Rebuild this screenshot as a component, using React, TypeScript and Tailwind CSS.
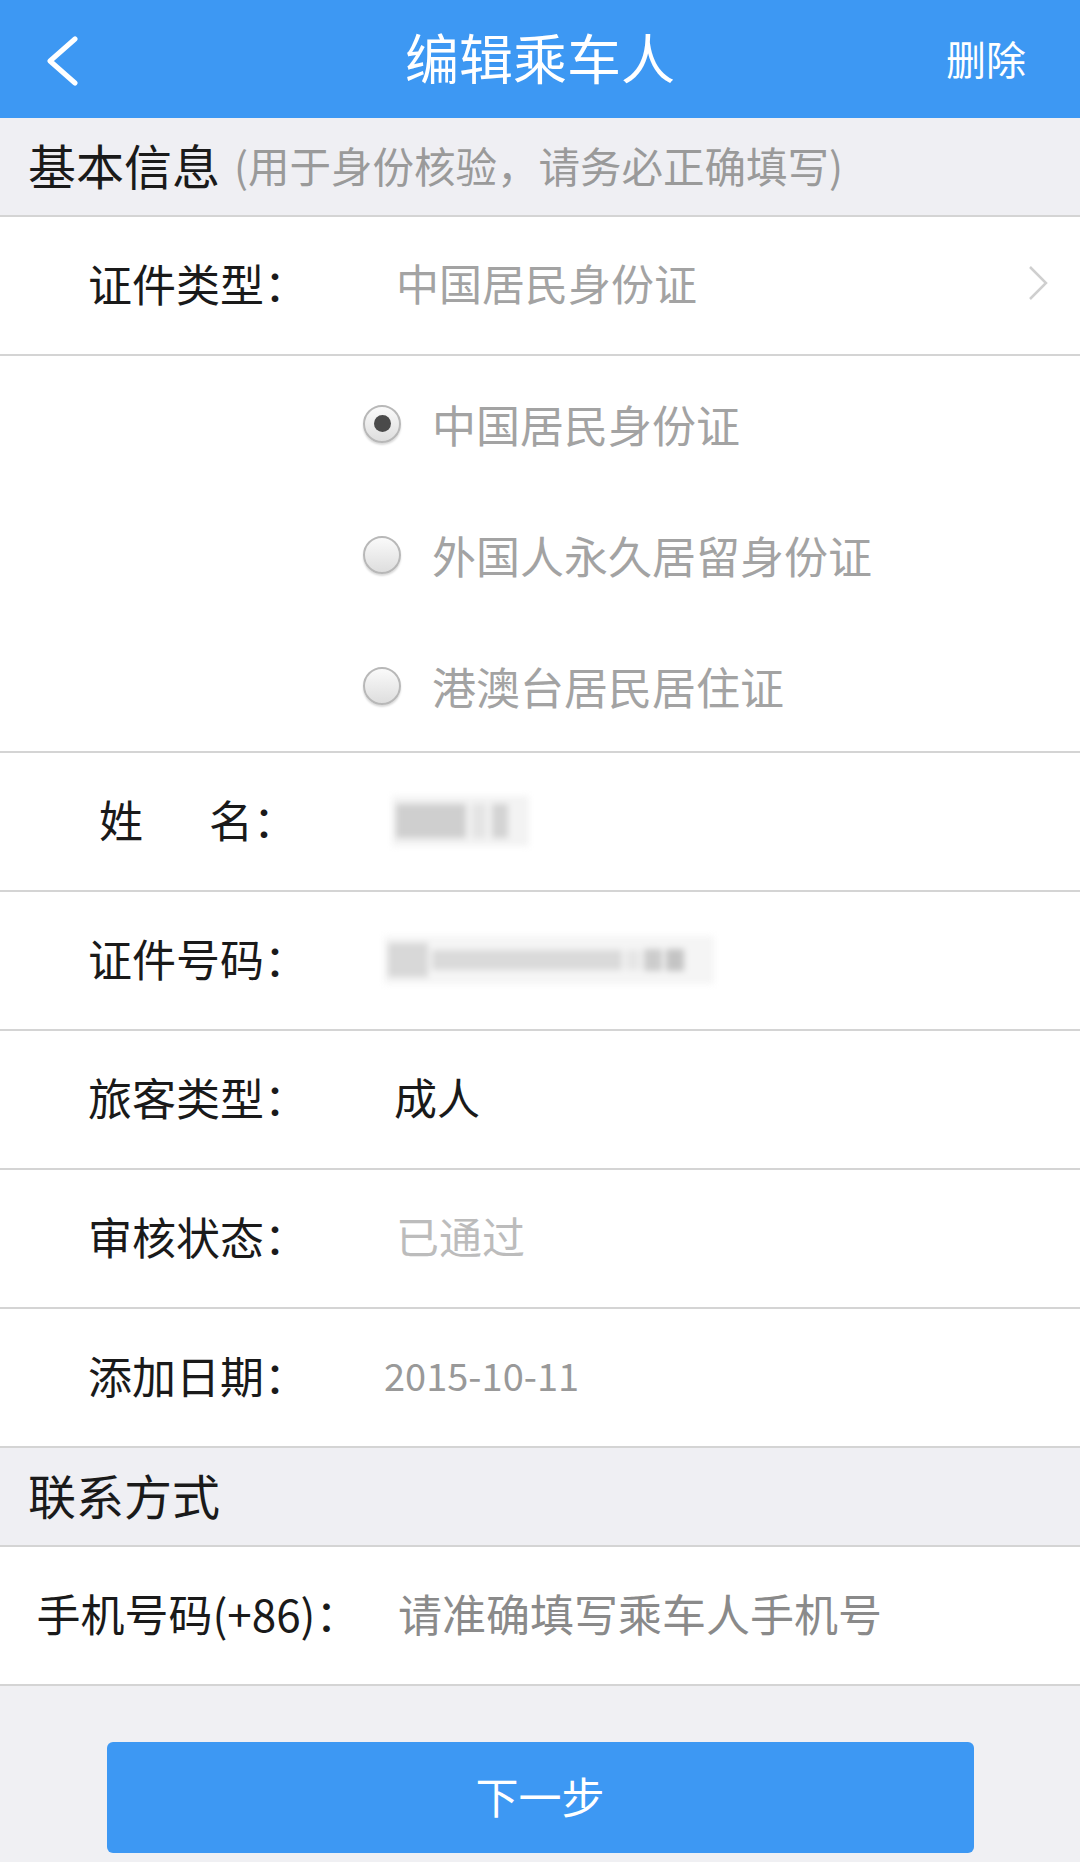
import React from "react"

const font = "font-['Noto_Sans_CJK_SC','Noto_Sans',sans-serif]"

function Radio({ checked, label }: { checked?: boolean; label: string }) {
  return (
    <div className="flex h-[131px] items-center">
      <div className="ml-[363px] flex h-[38px] w-[38px] items-center justify-center rounded-full border-2 border-[#b8b8b8] bg-gradient-to-b from-[#fafafa] to-[#dedede] shadow-[0_2px_2px_rgba(0,0,0,0.15)]">
        {checked && <div className="h-[17px] w-[17px] rounded-full bg-[#4a4a4a]" />}
      </div>
      <span className="ml-[31px] text-[44px] leading-none text-[#a3a3a3]">{label}</span>
    </div>
  )
}

function Row({ label, children }: { label: React.ReactNode; children?: React.ReactNode }) {
  return (
    <div className="flex h-[139px] items-center border-b-2 border-[#d4d4d4] bg-white pb-[6px]">
      <div className="w-[396px] shrink-0 text-center text-[44px] leading-none text-[#1a1a1a]">{label}</div>
      <div className="flex flex-1 items-center">{children}</div>
    </div>
  )
}

function Section({ children }: { children: React.ReactNode }) {
  return (
    <div className="flex h-[99px] items-center border-b-2 border-[#d4d4d4] bg-[#efeff3] pb-[6px] pl-[28px]">
      {children}
    </div>
  )
}

export default function App() {
  return (
    <div className={`${font} min-h-[1862px] w-[1080px] bg-[#f0f0f3]`}>
      {/* Header */}
      <div className="relative flex h-[118px] items-center justify-center bg-[#3d98f3] pb-[4px]">
        <svg className="absolute left-[44px] top-[36px]" width="36" height="50" viewBox="0 0 36 50">
          <polyline points="31,3 6,25 31,47" fill="none" stroke="white" strokeWidth="5" strokeLinecap="round" strokeLinejoin="round" />
        </svg>
        <span className="text-[54px] leading-none text-white">编辑乘车人</span>
        <span className="absolute right-[54px] top-[38px] text-[40px] leading-none text-white">删除</span>
      </div>

      <Section>
        <span className="text-[48px] leading-none text-[#1a1a1a]">基本信息</span>
        <span className="ml-[14px] mt-[4px] text-[41.5px] leading-none text-[#9a9a9a]">(用于身份核验，请务必正确填写)</span>
      </Section>

      <div className="flex h-[139px] items-center border-b-2 border-[#d4d4d4] bg-white pb-[6px]">
        <div className="w-[396px] shrink-0 text-center text-[44px] leading-none text-[#1a1a1a]">证件类型：</div>
        <span className="flex-1 text-[43px] leading-none text-[#a3a3a3]">中国居民身份证</span>
        <svg className="mr-[30px]" width="24" height="38" viewBox="0 0 24 38">
          <polyline points="4,3 20,19 4,35" fill="none" stroke="#cfcfcf" strokeWidth="2.5" />
        </svg>
      </div>

      <div className="flex flex-col border-b-2 border-[#d4d4d4] bg-white pt-[2px]">
        <Radio checked label="中国居民身份证" />
        <Radio label="外国人永久居留身份证" />
        <Radio label="港澳台居民居住证" />
      </div>

      <Row
        label={
          <span>
            姓<span className="ml-[66px]">名：</span>
          </span>
        }
      >
        <div className="ml-[-4px] mt-[4px] flex h-[50px] w-[137px] items-center gap-[6px] bg-[#f3f3f3] px-[4px] blur-[3px]">
          <div className="h-[34px] w-[70px] bg-[#cfcfcf]" />
          <div className="h-[34px] w-[14px] bg-[#e4e4e4]" />
          <div className="h-[34px] w-[16px] bg-[#d4d4d4]" />
        </div>
      </Row>

      <Row label="证件号码：">
        <div className="ml-[-12px] mt-[4px] flex h-[48px] w-[330px] items-center gap-[4px] bg-[#f5f5f5] px-[4px] blur-[3px]">
          <div className="h-[34px] w-[40px] bg-[#d8d8d8]" />
          <div className="h-[20px] w-[190px] bg-[#dadada]" />
          <div className="h-[20px] w-[14px] bg-[#e6e6e6]" />
          <div className="h-[22px] w-[18px] bg-[#cccccc]" />
          <div className="h-[22px] w-[18px] bg-[#c4c4c4]" />
        </div>
      </Row>

      <Row label="旅客类型：">
        <span className="ml-[-2px] text-[43px] leading-none text-[#1a1a1a]">成人</span>
      </Row>

      <Row label="审核状态：">
        <span className="text-[43px] leading-none text-[#bcbcbc]">已通过</span>
      </Row>

      <Row label="添加日期：">
        <span className="ml-[-12px] text-[38px] leading-none text-[#999999]">2015-10-11</span>
      </Row>

      <Section>
        <span className="text-[48px] leading-none text-[#1a1a1a]">联系方式</span>
      </Section>

      <Row label="手机号码(+86)：">
        <span className="ml-[2px] text-[44px] leading-none text-[#8a8a8a]">请准确填写乘车人手机号</span>
      </Row>

      <div className="flex justify-center pt-[56px]">
        <button className="flex h-[111px] w-[867px] items-center justify-center rounded-[6px] bg-[#3d98f3] pb-[4px] text-[43px] leading-none text-white">
          下一步
        </button>
      </div>
    </div>
  )
}
